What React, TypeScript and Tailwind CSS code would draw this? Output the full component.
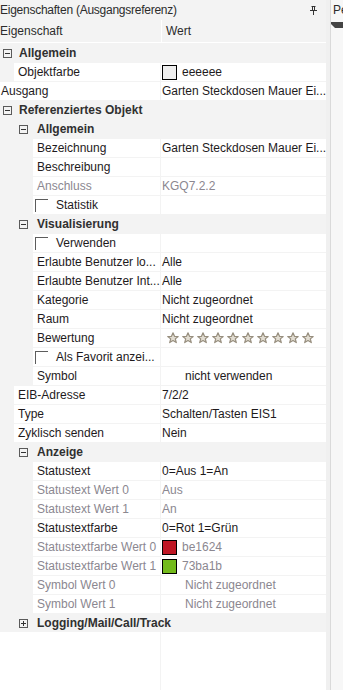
import React from "react";

type Row =
  | { kind: "cat"; level: 0 | 1; label: string; open?: boolean }
  | {
      kind: "prop";
      level: 0 | 1 | 2;
      label: string;
      value?: string;
      gray?: boolean;
      swatch?: string;
      check?: boolean;
      stars?: boolean;
      shifted?: boolean;
    };

const GARTEN = "Garten Steckdosen Mauer Ei...";

const rows: Row[] = [
  { kind: "cat", level: 0, label: "Allgemein", open: true },
  { kind: "prop", level: 1, label: "Objektfarbe", value: "eeeeee", swatch: "#eeeeee" },
  { kind: "prop", level: 0, label: "Ausgang", value: GARTEN },
  { kind: "cat", level: 0, label: "Referenziertes Objekt", open: true },
  { kind: "cat", level: 1, label: "Allgemein", open: true },
  { kind: "prop", level: 2, label: "Bezeichnung", value: GARTEN },
  { kind: "prop", level: 2, label: "Beschreibung" },
  { kind: "prop", level: 2, label: "Anschluss", value: "KGQ7.2.2", gray: true },
  { kind: "prop", level: 2, label: "Statistik", check: true },
  { kind: "cat", level: 1, label: "Visualisierung", open: true },
  { kind: "prop", level: 2, label: "Verwenden", check: true },
  { kind: "prop", level: 2, label: "Erlaubte Benutzer lo...", value: "Alle" },
  { kind: "prop", level: 2, label: "Erlaubte Benutzer Int...", value: "Alle" },
  { kind: "prop", level: 2, label: "Kategorie", value: "Nicht zugeordnet" },
  { kind: "prop", level: 2, label: "Raum", value: "Nicht zugeordnet" },
  { kind: "prop", level: 2, label: "Bewertung", stars: true },
  { kind: "prop", level: 2, label: "Als Favorit anzei...", check: true },
  { kind: "prop", level: 2, label: "Symbol", value: "nicht verwenden", shifted: true },
  { kind: "prop", level: 1, label: "EIB-Adresse", value: "7/2/2" },
  { kind: "prop", level: 1, label: "Type", value: "Schalten/Tasten EIS1" },
  { kind: "prop", level: 1, label: "Zyklisch senden", value: "Nein" },
  { kind: "cat", level: 1, label: "Anzeige", open: true },
  { kind: "prop", level: 2, label: "Statustext", value: "0=Aus 1=An" },
  { kind: "prop", level: 2, label: "Statustext Wert 0", value: "Aus", gray: true },
  { kind: "prop", level: 2, label: "Statustext Wert 1", value: "An", gray: true },
  { kind: "prop", level: 2, label: "Statustextfarbe", value: "0=Rot 1=Grün" },
  { kind: "prop", level: 2, label: "Statustextfarbe Wert 0", value: "be1624", swatch: "#be1624", gray: true },
  { kind: "prop", level: 2, label: "Statustextfarbe Wert 1", value: "73ba1b", swatch: "#73ba1b", gray: true },
  { kind: "prop", level: 2, label: "Symbol Wert 0", value: "Nicht zugeordnet", gray: true, shifted: true },
  { kind: "prop", level: 2, label: "Symbol Wert 1", value: "Nicht zugeordnet", gray: true, shifted: true },
  { kind: "cat", level: 1, label: "Logging/Mail/Call/Track" },
];

function Expander({ open }: { open?: boolean }) {
  return (
    <svg width="9" height="9" viewBox="0 0 9 9" className="shrink-0">
      <rect x="0.5" y="0.5" width="8" height="8" fill="none" stroke="#5a5a5a" />
      <path d="M2 4.5H7" stroke="#333" />
      {!open && <path d="M4.5 2V7" stroke="#333" />}
    </svg>
  );
}

function Star() {
  return (
    <svg width="12" height="12" viewBox="0 0 12 12" className="h-[12px] w-[12px] shrink-0">
      <path
        d="M6 0.8L7.5 4.3L11.2 4.5L8.3 6.9L9.3 10.6L6 8.6L2.7 10.6L3.7 6.9L0.8 4.5L4.5 4.3Z"
        fill="#e2ddd2"
        stroke="#978e7e"
        strokeWidth="1.2"
        strokeLinejoin="round"
      />
    </svg>
  );
}

function Checkbox() {
  return <div className="h-[13px] w-[13px] shrink-0 border-l border-t border-[#5c5c5c]" />;
}

function CategoryRow({ row }: { row: Extract<Row, { kind: "cat" }> }) {
  return (
    <div className="flex h-[19px] items-center pt-px">
      {row.level === 0 ? (
        <div className="flex items-center pl-[3px]">
          <Expander open={row.open} />
          <span className="pl-[7px] font-bold text-[#303030]">{row.label}</span>
        </div>
      ) : (
        <div className="flex items-center pl-[19px]">
          <Expander open={row.open} />
          <span className="pl-[9px] font-bold text-[#303030]">{row.label}</span>
        </div>
      )}
    </div>
  );
}

function PropRow({ row }: { row: Extract<Row, { kind: "prop" }> }) {
  const indent = row.level === 0 ? "w-0" : row.level === 1 ? "w-[14px]" : "w-[33px]";
  const pad = row.check ? "pl-[2px]" : row.level === 0 ? "pl-px" : "pl-[4px]";
  const tone = row.gray ? "text-[#8b8790]" : "text-[#1e1a1c]";
  return (
    <div className="flex h-[19px] gap-px pt-px">
      <div className="flex h-[18px] w-[160px] shrink-0">
        <div className={`${indent} shrink-0`} />
        <div className={`flex flex-1 items-center overflow-hidden whitespace-nowrap bg-white ${pad}`}>
          {row.check ? (
            <>
              <Checkbox />
              <span className="pl-[8px] text-[#1e1a1c]">{row.label}</span>
            </>
          ) : (
            <span className={tone}>{row.label}</span>
          )}
        </div>
      </div>
      <div className="flex h-[18px] flex-1 items-center overflow-hidden whitespace-nowrap bg-white pl-px">
        {row.swatch && (
          <div
            className="mr-[5px] h-[15px] w-[15px] shrink-0 border border-black"
            style={{ backgroundColor: row.swatch }}
          />
        )}
        {row.stars ? (
          <div className="flex shrink-0 gap-[3px] pl-[5px]">
            {Array.from({ length: 10 }).map((_, i) => (
              <Star key={i} />
            ))}
          </div>
        ) : (
          <span className={`${tone} ${row.shifted ? "pl-[23px]" : ""}`}>{row.value}</span>
        )}
      </div>
    </div>
  );
}

export default function App() {
  return (
    <div className="flex h-[690px] w-[343px] overflow-hidden bg-[#f3f3f3] font-['Liberation_Sans',Arial,sans-serif] text-[12px] leading-[18px]">
      <div className="flex w-[326px] shrink-0 flex-col">
        <div className="flex h-[20px] items-center justify-between pr-[9px] text-[#2c2c2c]">
          <span className="tracking-[-0.25px]">Eigenschaften (Ausgangsreferenz)</span>
          <svg width="7" height="9" viewBox="0 0 7 9">
            <path d="M1.5 0.5H5.5M2.5 0.5V4.5M4.5 0.5V4.5M0 4.5H7M3.5 4.5V9" stroke="#333" fill="none" />
          </svg>
        </div>
        <div className="flex h-[23px] border-b border-white text-[#2c2c2c]">
          <div className="flex w-[162px] items-center border-r border-white">Eigenschaft</div>
          <div className="flex items-center pl-[4px]">Wert</div>
        </div>
        {rows.map((row, i) =>
          row.kind === "cat" ? <CategoryRow key={i} row={row} /> : <PropRow key={i} row={row} />
        )}
        <div className="flex flex-1 gap-px">
          <div className="w-[160px] bg-white" />
          <div className="flex-1 bg-white" />
        </div>
      </div>
      <div className="flex flex-1">
        <div className="w-[4px] bg-[#f0f0f0]" />
        <div className="w-px bg-[#dadada]" />
        <div className="flex flex-1 flex-col bg-[#f7f7f7]">
          <div className="flex h-[20px] items-center pl-[2px] text-[#2c2c2c]">Pe</div>
          <svg width="12" height="8" viewBox="0 0 12 8" className="mt-[2px]">
            <path d="M0 0H12V6L4 6L0 2Z" fill="#444" />
          </svg>
        </div>
      </div>
    </div>
  );
}
